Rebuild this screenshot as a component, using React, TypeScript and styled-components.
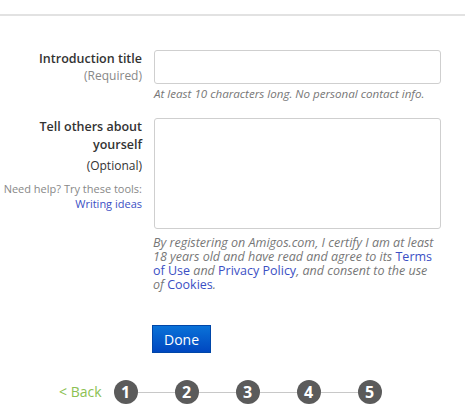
import React from "react";
import styled, { createGlobalStyle } from "styled-components";

const Global = createGlobalStyle`
  html, body { margin: 0; padding: 0; background: #fff; }
  body { font-family: "Open Sans", "Noto Sans", Arial, sans-serif; color: #333; }
  * { box-sizing: border-box; }
`;

const Page = styled.div`
  width: 466px;
  height: 415px;
  overflow: hidden;
  padding-top: 14px;
`;

const Rule = styled.div`
  width: 465px;
  height: 2px;
  background: #e2e2e2;
`;

const Form = styled.div`
  display: grid;
  grid-template-columns: 142px 287px;
  column-gap: 12px;
  padding-top: 34px;
`;

const LabelCol = styled.div<{ $top?: number }>`
  text-align: right;
  padding-top: ${(p) => p.$top ?? 0}px;
`;

const LabelTitle = styled.div`
  font-size: 12.5px;
  font-weight: 600;
  line-height: 18px;
  color: #333;
`;

const LabelNote = styled.div<{ $dark?: boolean; $mt?: number }>`
  font-size: 12px;
  line-height: 15px;
  color: ${(p) => (p.$dark ? "#333" : "#888")};
  margin-top: ${(p) => p.$mt ?? 0}px;
`;

const HelpText = styled.div`
  font-size: 11px;
  line-height: 15px;
  color: #888;
  margin-top: 8px;
`;

const Link = styled.a`
  color: #3b4fc4;
  text-decoration: none;
  font-style: normal;
`;

const FieldCol = styled.div<{ $mb?: number }>`
  margin-bottom: ${(p) => p.$mb ?? 0}px;
`;

const Input = styled.div`
  width: 287px;
  height: 34px;
  border: 1px solid #cfcfcf;
  border-radius: 3px;
  background: #fff;
`;

const TextArea = styled.div`
  width: 287px;
  height: 111px;
  border: 1px solid #cfcfcf;
  border-radius: 3px;
  background: #fff;
`;

const Hint = styled.div`
  font-size: 11.6px;
  font-style: italic;
  line-height: 16px;
  color: #777;
  margin-top: 2px;
`;

const Disclaimer = styled.p`
  margin: 7px 0 0 -1px;
  width: 287px;
  font-size: 12.5px;
  font-style: italic;
  line-height: 14px;
  color: #777;
`;

const Button = styled.button`
  display: block;
  margin-top: 33px;
  margin-left: -2px;
  width: 59px;
  height: 28px;
  border: 1px solid #0046a8;
  background: linear-gradient(#0a72d8, #0047c0);
  color: #fff;
  font-family: inherit;
  font-size: 14px;
  padding: 0;
`;

const Steps = styled.div`
  display: flex;
  align-items: center;
  margin-top: 27px;
  padding-left: 59px;
`;

const Back = styled.span`
  font-size: 14px;
  color: #8cc152;
  margin-right: 12px;
  line-height: 20px;
`;

const Circle = styled.span`
  width: 24px;
  height: 24px;
  border-radius: 50%;
  background: #5b5b5b;
  color: #fff;
  font-weight: 700;
  font-size: 16px;
  display: flex;
  align-items: center;
  justify-content: center;
  flex-shrink: 0;
`;

const Connector = styled.span`
  width: 37px;
  height: 1px;
  background: #c8c8c8;
`;

export default function App() {
  const steps = [1, 2, 3, 4, 5];
  return (
    <>
      <Global />
      <Page>
        <Rule />
        <Form>
          <LabelCol>
            <LabelTitle>Introduction title</LabelTitle>
            <LabelNote>(Required)</LabelNote>
          </LabelCol>
          <FieldCol $mb={16}>
            <Input />
            <Hint>At least 10 characters long. No personal contact info.</Hint>
          </FieldCol>

          <LabelCol $top={0}>
            <LabelTitle>Tell others about</LabelTitle>
            <LabelTitle>yourself</LabelTitle>
            <LabelNote $dark $mt={4}>(Optional)</LabelNote>
            <HelpText>
              Need help? Try these tools:
              <br />
              <Link>Writing ideas</Link>
            </HelpText>
          </LabelCol>
          <FieldCol>
            <TextArea />
            <Disclaimer>
              By registering on Amigos.com, I certify I am at least 18 years old and have read and agree to its{" "}
              <Link>Terms of Use</Link> and <Link>Privacy Policy</Link>, and consent to the use of{" "}
              <Link>Cookies</Link>.
            </Disclaimer>
            <Button>Done</Button>
          </FieldCol>
        </Form>
        <Steps>
          <Back>&lt; Back</Back>
          {steps.map((n, i) => (
            <React.Fragment key={n}>
              {i > 0 && <Connector />}
              <Circle>{n}</Circle>
            </React.Fragment>
          ))}
        </Steps>
      </Page>
    </>
  );
}
